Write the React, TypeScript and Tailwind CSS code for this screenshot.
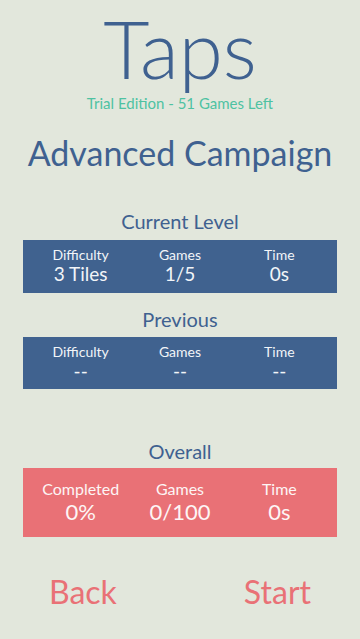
import React from "react";

const blue = "text-[#3f6190]";

function Stat({ label, value, labelCls, valueCls }: { label: string; value: string; labelCls: string; valueCls: string }) {
  return (
    <div className="flex flex-col items-center">
      <div className={labelCls}>{label}</div>
      <div className={valueCls}>{value}</div>
    </div>
  );
}

export default function App() {
  const font = { fontFamily: "Lato, 'Open Sans', sans-serif" };
  return (
    <div className="w-[360px] h-[639px] bg-[#e2e7dc] flex flex-col overflow-hidden" style={font}>
      <div className={`text-center text-[80px] leading-[96px] font-light ${blue}`}>Taps</div>
      <div className="text-center text-[15px] leading-[15px] text-[#4ec2a2]">Trial Edition - 51 Games Left</div>
      <div className={`mt-[24px] text-center text-[34px] leading-[35px] ${blue}`}>Advanced Campaign</div>

      <div className={`mt-[41px] text-center text-[20px] leading-[20px] ${blue}`}>Current Level</div>
      <div className="mt-[9px] mx-[23px] h-[53px] bg-[#40628f] grid grid-cols-3 px-2 pt-[8px] text-[#f2f5f8]">
        <Stat label="Difficulty" value="3 Tiles" labelCls="text-[14px] leading-[14px]" valueCls="mt-[2px] text-[19px] leading-[19px]" />
        <Stat label="Games" value="1/5" labelCls="text-[14px] leading-[14px]" valueCls="mt-[2px] text-[19px] leading-[19px]" />
        <Stat label="Time" value="0s" labelCls="text-[14px] leading-[14px]" valueCls="mt-[2px] text-[19px] leading-[19px]" />
      </div>

      <div className={`mt-[16px] text-center text-[20px] leading-[20px] ${blue}`}>Previous</div>
      <div className="mt-[8px] mx-[23px] h-[52px] bg-[#40628f] grid grid-cols-3 px-2 pt-[8px] text-[#f2f5f8]">
        <Stat label="Difficulty" value="--" labelCls="text-[14px] leading-[14px]" valueCls="mt-[2px] text-[19px] leading-[19px]" />
        <Stat label="Games" value="--" labelCls="text-[14px] leading-[14px]" valueCls="mt-[2px] text-[19px] leading-[19px]" />
        <Stat label="Time" value="--" labelCls="text-[14px] leading-[14px]" valueCls="mt-[2px] text-[19px] leading-[19px]" />
      </div>

      <div className={`mt-[52px] text-center text-[20px] leading-[20px] ${blue}`}>Overall</div>
      <div className="mt-[7px] mx-[23px] h-[69px] bg-[#e97176] grid grid-cols-3 px-2 pt-[13px] text-[#fdf5f5]">
        <Stat label="Completed" value="0%" labelCls="text-[16px] leading-[16px]" valueCls="mt-[4px] text-[22px] leading-[22px]" />
        <Stat label="Games" value="0/100" labelCls="text-[16px] leading-[16px]" valueCls="mt-[4px] text-[22px] leading-[22px]" />
        <Stat label="Time" value="0s" labelCls="text-[16px] leading-[16px]" valueCls="mt-[4px] text-[22px] leading-[22px]" />
      </div>

      <div className="mt-[38px] px-[49px] flex justify-between text-[32px] leading-[34px] text-[#e97176]">
        <span>Back</span>
        <span>Start</span>
      </div>
    </div>
  );
}
